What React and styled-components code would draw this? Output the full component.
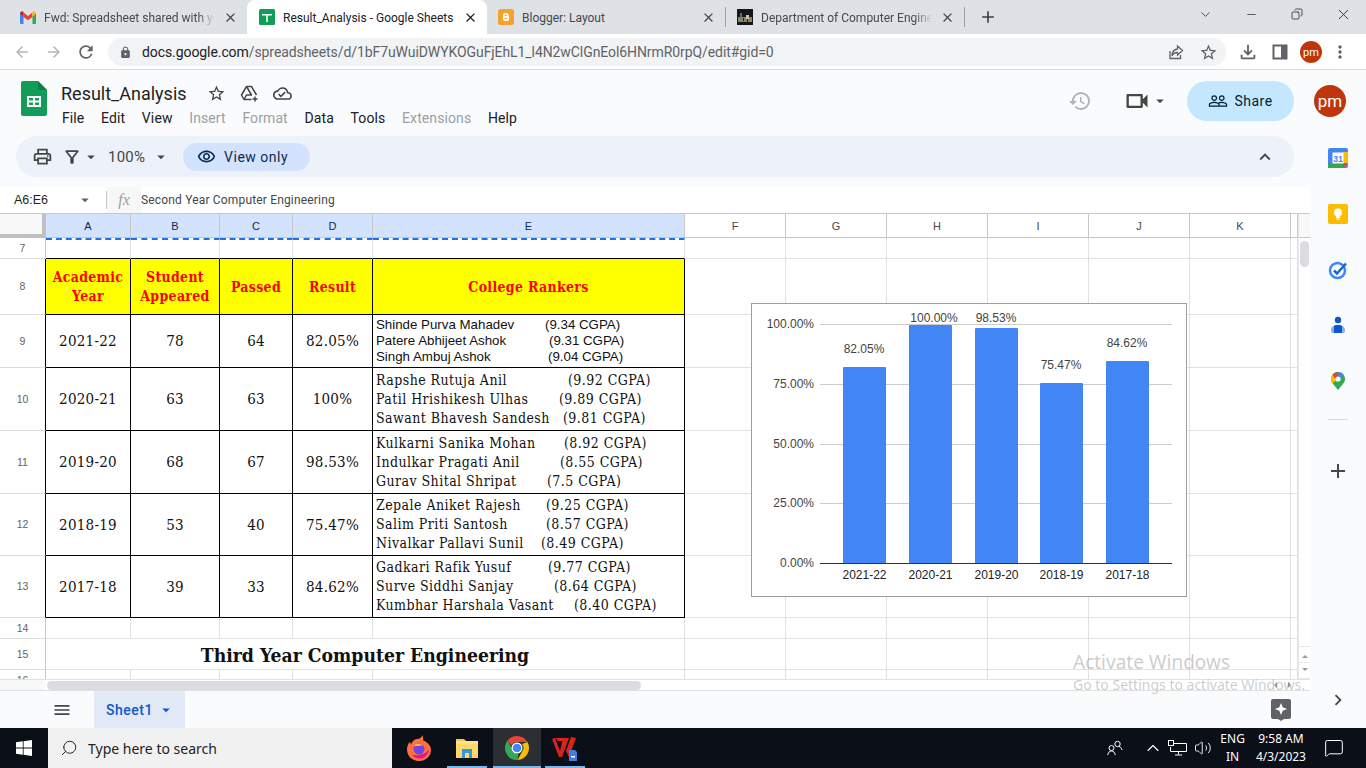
import React from 'react';
import styled, { createGlobalStyle } from 'styled-components';
import {
  MdArrowBack, MdArrowForward, MdRefresh, MdLock, MdStarBorder, MdOutlineFileDownload, MdMoreVert,
  MdClose, MdAdd, MdOutlineCloudDone, MdHistory, MdOutlineVideocam, MdArrowDropDown,
  MdPeopleOutline, MdOutlinePrint, MdOutlineFilterAlt, MdOutlineRemoveRedEye, MdKeyboardArrowUp,
  MdChevronRight, MdMenu,
} from 'react-icons/md';
import { ChevronDown, Minus, Copy, X, Search, MessageSquare, Volume2, ChevronUp } from 'lucide-react';

const serif = "'DejaVu Serif Condensed', 'Liberation Serif', serif";

const GlobalStyle = createGlobalStyle`
  html, body { margin: 0; padding: 0; background: #fff; }
  * { box-sizing: border-box; }
`;

const Page = styled.div`
  width: 1366px;
  height: 768px;
  overflow: hidden;
  position: relative;
  display: flex;
  flex-direction: column;
  font-family: 'Roboto', sans-serif;
  background: #f9fbfd;
`;
const Mirror = styled.span`
  display: flex;
  transform: scaleX(-1);
`;

/* browser chrome */
const TabStrip = styled.div`
  height: 34px;
  background: #dee1e6;
  display: flex;
  align-items: center;
  padding-left: 9px;
  flex: none;
`;
const Tab = styled.div`
  width: ${p => p.$w}px;
  height: 34px;
  display: flex;
  align-items: center;
  gap: 8px;
  padding: 0 9px 0 ${p => (p.$active ? 12 : 11)}px;
  font-family: 'Roboto', sans-serif;
  font-size: 12px;
  border-radius: 8px 8px 0 0;
  background: ${p => (p.$active ? '#fff' : 'transparent')};
  color: ${p => (p.$active ? '#202124' : '#45494e')};
`;
const TabTitle = styled.span`
  flex: 1;
  white-space: nowrap;
  overflow: hidden;
  padding-top: 1px;
  ${p => p.$fade && `
    -webkit-mask-image: linear-gradient(to right, #000 90%, transparent);
    mask-image: linear-gradient(to right, #000 90%, transparent);
  `}
`;
const TabSep = styled.div`
  width: 1px;
  height: 20px;
  background: #9aa0a6;
  flex: none;
`;
const NewTab = styled.div`
  margin-left: 13px;
  display: flex;
  color: #3c4043;
`;
const WinButtons = styled.div`
  margin-left: auto;
  display: flex;
  align-items: center;
  color: #202124;
  padding-bottom: 6px;
`;
const WinButton = styled.div`
  width: 46px;
  display: flex;
  justify-content: center;
`;
const AddressRow = styled.div`
  height: 36px;
  flex: none;
  background: #fff;
  border-bottom: 1px solid #dadce0;
  display: flex;
  align-items: center;
  padding: 1px 0 0 6px;
  color: #5f6368;
`;
const NavIcon = styled.div`
  width: 32px;
  display: flex;
  justify-content: center;
  color: ${p => (p.$off ? '#b3b6ba' : '#5f6368')};
`;
const Omnibox = styled.div`
  width: 1118px;
  height: 28px;
  margin-left: 6px;
  border-radius: 14px;
  background: #f1f3f4;
  display: flex;
  align-items: center;
  padding: 0 2px 0 11px;
  font-family: 'Roboto', sans-serif;
  font-size: 14px;
  color: #5f6368;
`;
const UrlText = styled.div`
  margin-left: 10px;
  flex: 1;
  white-space: nowrap;
  letter-spacing: -0.08px;
  b { font-weight: 400; color: #202124; }
`;
const OmniIcon = styled.div`
  width: 32px;
  display: flex;
  justify-content: center;
  color: #5f6368;
  margin-left: ${p => p.$ml || 0}px;
`;
const ProfileDot = styled.div`
  width: ${p => p.$size}px;
  height: ${p => p.$size}px;
  border-radius: 50%;
  background: #bf360c;
  color: #fff;
  display: flex;
  align-items: center;
  justify-content: center;
  font-family: 'Roboto', sans-serif;
  font-size: ${p => p.$font}px;
  flex: none;
  margin-left: ${p => p.$ml || 0}px;
`;

/* docs header */
const Main = styled.div`
  flex: 1;
  display: flex;
  min-height: 0;
`;
const Workspace = styled.div`
  width: 1310px;
  display: flex;
  flex-direction: column;
`;
const DocHeader = styled.div`
  height: 66px;
  flex: none;
  display: flex;
  align-items: flex-start;
  padding: 11px 20px 0 21px;
`;
const TitleBlock = styled.div`
  margin-left: 14px;
  display: flex;
  flex-direction: column;
`;
const TitleRow = styled.div`
  height: 24px;
  display: flex;
  align-items: center;
  font-size: 18px;
  color: #1f1f1f;
`;
const DocIcon = styled.div`
  width: 33px;
  display: flex;
  justify-content: center;
  color: #444746;
  &:first-of-type { margin-left: 13px; }
`;
const Menu = styled.div`
  display: flex;
  gap: 16.7px;
  margin-top: 3px;
  font-size: 14px;
  line-height: 20px;
  letter-spacing: 0.1px;
  margin-left: 1px;
`;
const MenuItem = styled.span`
  color: ${p => (p.$off ? '#9aa0a6' : '#202124')};
`;
const HeaderRight = styled.div`
  margin-left: auto;
  display: flex;
  align-items: center;
  height: 40px;
`;
const HistoryIcon = styled.div`
  display: flex;
  color: #b0b3b7;
  margin-right: 31px;
`;
const MeetButton = styled.div`
  display: flex;
  align-items: center;
  color: #444746;
  margin-right: 18px;
`;
const ShareButton = styled.div`
  width: 107px;
  height: 40px;
  border-radius: 20px;
  background: #c2e7ff;
  display: flex;
  align-items: center;
  justify-content: center;
  gap: 6px;
  font-size: 14px;
  letter-spacing: 0.5px;
  color: #001d35;
  margin-right: 20px;
`;

const ToolbarPill = styled.div`
  width: 1278px;
  height: 41px;
  flex: none;
  margin-left: 16px;
  border-radius: 21px;
  background: #edf2fa;
  display: flex;
  align-items: center;
  padding: 0 18px 0 16px;
  color: #444746;
`;
const ToolIcon = styled.div`
  display: flex;
  align-items: center;
  margin-left: ${p => p.$ml || 0}px;
  color: #444746;
`;
const ToolEnd = styled(ToolIcon)`
  margin-left: auto;
`;
const Zoom = styled.span`
  margin-left: 8px;
  font-size: 15px;
  letter-spacing: 0.2px;
  color: #444746;
`;
const ViewOnly = styled.div`
  margin-left: 13px;
  width: 127px;
  height: 28px;
  border-radius: 14px;
  background: #d3e3fd;
  display: flex;
  align-items: center;
  gap: 8px;
  padding-left: 14px;
  font-size: 14px;
  letter-spacing: 0.5px;
  color: #0b2c52;
`;

const FormulaBar = styled.div`
  height: 27px;
  flex: none;
  margin-top: 10px;
  background: #fff;
  display: flex;
  align-items: center;
  font-family: 'Liberation Sans', Arial, sans-serif;
  font-size: 12px;
  color: #444746;
  border-bottom: 1px solid #c7c7c7;
`;
const NameBox = styled.div`
  width: 107px;
  display: flex;
  align-items: center;
  padding-left: 14px;
  height: 18px;
  border-right: 1px solid #c7c7c7;
  font-size: 12.5px;
  color: #1f1f1f;
`;
const NameCaret = styled.div`
  margin-left: 28px;
  display: flex;
  color: #5f6368;
`;
const Fx = styled.div`
  width: 34px;
  height: 26px;
  background: #f7f7f7;
  display: flex;
  align-items: center;
  justify-content: center;
  font-family: 'Liberation Serif', serif;
  font-style: italic;
  font-size: 16px;
  color: #a0a0a0;
`;
const FormulaText = styled.div`
  font-family: 'Roboto', sans-serif;
  font-size: 12px;
  letter-spacing: 0.17px;
  color: #444746;
`;

/* sheet */
const columns = '46px 85px 89px 73px 80px 312px 101px 101px 101px 101px 101px 101px 7px';
const SheetRow = styled.div`
  display: grid;
  grid-template-columns: ${columns};
  height: ${p => p.$h}px;
`;
const SheetBody = styled.div`
  display: flex;
  height: 465px;
  flex: none;
  background: #fff;
`;
const GridPane = styled.div`
  width: 1298px;
  overflow: hidden;
`;
const ColHead = styled.div`
  height: 24px;
  display: flex;
  align-items: center;
  justify-content: center;
  font-family: 'Liberation Sans', Arial, sans-serif;
  font-size: 11px;
  background: ${p => (p.$sel ? '#d3e3fd' : '#fff')};
  border-right: 1px solid #c7c7c7;
  border-bottom: 1px solid #c7c7c7;
  color: ${p => (p.$sel ? '#0b2c52' : '#444746')};
`;
const Corner = styled(ColHead)`
  background: #f8f8f8;
  border-right: 4px solid #c0c0c0;
  border-bottom: 4px solid #c0c0c0;
`;
const RowNum = styled.div`
  display: flex;
  align-items: center;
  justify-content: center;
  font-family: 'Liberation Sans', Arial, sans-serif;
  font-size: 10.5px;
  color: #5f6368;
  background: #fff;
  padding-bottom: 1px;
  border-right: 1px solid ${p => (p.$black ? '#000' : '#c7c7c7')};
  border-bottom: 1px solid #dcdcdc;
`;
const Cell = styled.div`
  display: flex;
  align-items: center;
  justify-content: center;
  text-align: center;
  min-width: 0;
  overflow: hidden;
  font-family: ${serif};
  font-size: 15px;
  letter-spacing: 0.25px;
  color: #111;
  border-right: 1px solid ${p => (p.$black ? '#000' : '#e1e1e1')};
  border-bottom: 1px solid ${p => (p.$black || p.$under ? '#000' : '#e1e1e1')};
  ${p => p.$dash && 'border-top: 2px dashed #1a73e8;'}
  ${p => p.$span && `grid-column: span ${p.$span};`}
`;
const HeadCell = styled(Cell)`
  background: #ff0;
  color: #f00;
  font-weight: 700;
  font-size: 14px;
  letter-spacing: 0.3px;
  line-height: 19px;
  padding-top: 1px;
`;
const TitleCell = styled(Cell)`
  font-size: 19.2px;
  font-weight: 700;
  letter-spacing: 0;
  padding-top: 2px;
`;
const RankCell = styled(Cell)`
  flex-direction: column;
  align-items: stretch;
  justify-content: center;
  padding-left: 3px;
  text-align: left;
  line-height: ${p => (p.$plain ? '16px' : '19px')};
  font-size: ${p => (p.$plain ? '13.3px' : '14px')};
  letter-spacing: ${p => (p.$plain ? '0' : '0.45px')};
  font-family: ${p => (p.$plain ? "'Liberation Sans', Arial, sans-serif" : serif)};
`;
const RankLine = styled.div`
  display: flex;
  white-space: nowrap;
`;
const RankName = styled.span`
  flex: 0 0 ${p => p.$w}px;
`;
const VScroll = styled.div`
  width: 12px;
  display: flex;
  flex-direction: column;
  background: #fff;
  border-left: 1px solid #e8e8e8;
`;
const VTop = styled.div`
  height: 24px;
  background: #f8f8f8;
  border-bottom: 1px solid #c7c7c7;
`;
const VThumb = styled.div`
  margin: 3px 0 0 1px;
  width: 9px;
  height: 26px;
  border-radius: 5px;
  background: #dadce0;
`;
const VArrows = styled.div`
  margin-top: auto;
  border-top: 1px solid #e8e8e8;
`;
const ArrowSlot = styled.div`
  height: 16px;
  display: flex;
  align-items: center;
  justify-content: center;
  border-bottom: 1px solid #e8e8e8;
`;
const Triangle = styled.span`
  width: 0;
  height: 0;
  border: 3px solid transparent;
  ${p => `border-${p.$point}-color: #9a9a9a;`}
`;
const HScroll = styled.div`
  height: 12px;
  flex: none;
  border-top: 1px solid #e1e1e1;
  border-bottom: 1px solid #e1e1e1;
  display: flex;
  align-items: center;
  padding-left: 47px;
  background: linear-gradient(to right, #f8f8f8 45px, #fff 45px);
`;
const HThumb = styled.div`
  width: 594px;
  height: 9px;
  border-radius: 5px;
  background: #dadce0;
`;
const HArrows = styled.div`
  margin-left: auto;
  margin-right: 16px;
  display: flex;
  gap: 11px;
`;
const SheetTabs = styled.div`
  height: 37px;
  flex: none;
  display: flex;
  align-items: center;
  padding-left: 52px;
  color: #444746;
`;
const SheetTab = styled.div`
  margin-left: 22px;
  width: 91px;
  height: 37px;
  background: #e1e9f7;
  display: flex;
  align-items: center;
  padding-left: 12px;
  gap: 4px;
  font-family: 'Roboto', sans-serif;
  font-size: 14px;
  font-weight: 500;
  letter-spacing: 0.5px;
  color: #0b57d0;
`;
const ExploreBtn = styled.div`
  margin-left: auto;
  margin-right: 19px;
  display: flex;
`;

const SidePanel = styled.div`
  width: 56px;
  display: flex;
  flex-direction: column;
  align-items: center;
  padding-top: 12px;
`;
const SideIcon = styled.div`
  height: 56px;
  margin-top: ${p => p.$mt || 0}px;
  display: flex;
  align-items: ${p => (p.$mid ? 'center' : 'flex-start')};
  justify-content: center;
`;
const SideRule = styled.div`
  width: 20px;
  height: 1px;
  background: #d5d8dc;
  margin-top: -9px;
`;
const SideBottom = styled.div`
  margin-top: auto;
  margin-bottom: 17px;
  display: flex;
  color: #444746;
`;

/* taskbar */
const Taskbar = styled.div`
  height: 40px;
  flex: none;
  background: #0b0f18;
  display: flex;
  align-items: center;
  color: #fff;
`;
const StartBtn = styled.div`
  width: 48px;
  display: flex;
  justify-content: center;
`;
const SearchBox = styled.div`
  width: 344px;
  height: 40px;
  background: #f1f1f1;
  display: flex;
  align-items: center;
  padding-left: 12px;
  gap: 10px;
  font-family: 'Noto Sans', sans-serif;
  font-size: 14px;
  color: #222;
`;
const Pinned = styled.div`
  display: flex;
  margin-left: 3px;
`;
const PinSlot = styled.div`
  width: 48px;
  height: 40px;
  display: flex;
  align-items: center;
  justify-content: center;
  position: relative;
  margin-left: ${p => (p.$focus ? 2 : 0)}px;
  background: ${p => (p.$focus ? '#2b2e33' : 'transparent')};
  &::after {
    content: '';
    display: ${p => (p.$open ? 'block' : 'none')};
    position: absolute;
    bottom: 0;
    left: ${p => (p.$focus ? 0 : 4)}px;
    right: ${p => (p.$focus ? 0 : 4)}px;
    height: 2px;
    background: #76b9ed;
  }
`;
const Tray = styled.div`
  margin-left: auto;
  display: flex;
  align-items: center;
  color: #fff;
  font-family: 'Noto Sans', sans-serif;
  font-size: 12px;
`;
const TrayIcon = styled.div`
  display: flex;
  margin-right: ${p => p.$mr}px;
`;
const TrayText = styled.div`
  text-align: center;
  line-height: 18px;
  margin-right: ${p => p.$mr}px;
`;

/* overlays */
const ChartBox = styled.div`
  position: absolute;
  left: 751px;
  top: 303px;
  width: 436px;
  height: 294px;
  background: #fff;
  border: 1px solid #9e9e9e;
`;
const Watermark = styled.div`
  position: absolute;
  left: 1073px;
  top: 650px;
  font-family: 'Noto Sans', sans-serif;
  color: rgba(120, 120, 120, 0.38);
  pointer-events: none;
`;
const WatermarkTitle = styled.div`
  font-size: 19px;
  line-height: 24px;
`;
const WatermarkNote = styled.div`
  font-size: 14px;
  line-height: 22px;
  white-space: nowrap;
`;

const GmailIcon = () => (
  <svg width="16" height="13" viewBox="0 0 16 13">
    <path d="M0 2v10a1 1 0 0 0 1 1h2.500V5.500z" fill="#4285f4" />
    <path d="M16 2v10a1 1 0 0 1-1 1h-2.500V5.500z" fill="#34a853" />
    <path d="M3.500 6V1.500L8 5l4.500-3.500V6L8 9.200z" fill="#ea4335" />
    <path d="M0 2.500C0 .8 2-.5 3.500.8V6z" fill="#c5221f" />
    <path d="M16 2.500C16 .8 14-.5 12.500.8V6z" fill="#fbbc04" />
  </svg>
);
const SheetsFavicon = () => (
  <svg width="16" height="16" viewBox="0 0 16 16">
    <rect width="16" height="16" rx="1.500" fill="#0f9d58" />
    <path d="M3 5h10v1.500H8.800V13H7.200V6.500H3z" fill="#fff" />
  </svg>
);
const BloggerIcon = () => (
  <svg width="16" height="16" viewBox="0 0 16 16">
    <rect width="16" height="16" rx="2.500" fill="#f6a02d" />
    <path d="M5 6a2 2 0 0 1 2-2h1.500A2 2 0 0 1 10.500 6v.5c0 .4.6.3.6.9V10a2 2 0 0 1-2 2H7a2 2 0 0 1-2-2z" fill="#fff" />
    <rect x="6.500" y="5.800" width="2.500" height="1" fill="#f6a02d" />
    <rect x="6.500" y="9" width="3" height="1" fill="#f6a02d" />
  </svg>
);
const CollegeFavicon = () => (
  <svg width="16" height="16" viewBox="0 0 16 16">
    <rect width="16" height="16" fill="#14161a" />
    <rect x="1" y="8" width="14" height="5" fill="#8d8468" />
    <rect x="3" y="4" width="2" height="5" fill="#3c7f8c" />
    <rect x="9" y="6" width="3" height="4" fill="#c9c2a5" />
    <rect x="6" y="9" width="1" height="3" fill="#222" />
    <rect x="10" y="10" width="1" height="3" fill="#222" />
  </svg>
);
const ShareIcon = () => (
  <svg width="18" height="18" viewBox="0 0 18 18" fill="none" stroke="#5f6368" strokeWidth="1.300">
    <path d="M3 8v7.500h10.500V12" />
    <path d="M10.500 3l5 4.500-5 4.500V9.500C8 9.500 6 10.500 5 13c0-4 2-6.500 5.500-7z" />
  </svg>
);
const SidePanelIcon = () => (
  <svg width="16" height="16" viewBox="0 0 16 16">
    <path d="M1.500 1.500h13v13h-13z" fill="none" stroke="#5f6368" strokeWidth="2" />
    <rect x="9" y="1" width="6" height="14" fill="#5f6368" />
  </svg>
);
const SheetsLogo = () => (
  <svg width="26" height="35" viewBox="0 0 26 35">
    <path d="M2 0h15l9 9v24a2 2 0 0 1-2 2H2a2 2 0 0 1-2-2V2a2 2 0 0 1 2-2z" fill="#0f9d58" />
    <path d="M17 0l9 9h-7a2 2 0 0 1-2-2z" fill="#0b8043" />
    <path d="M6 15h14v11H6zm2 2v2.500h4V17zm6 0v2.500h4V17zm-6 4.500V24h4v-2.500zm6 0V24h4v-2.500z" fill="#fff" fillRule="evenodd" />
  </svg>
);
const DriveAddIcon = () => (
  <svg width="19" height="19" viewBox="0 0 19 19" fill="none" stroke="#444746" strokeWidth="1.500" strokeLinejoin="round">
    <path d="M6.500 2.500h5l5 8.500M6.500 2.500L1.500 11l2.500 4.500h7.500" />
    <path d="M6.500 2.500l5 8.500H6.500L4 15.500" />
    <path d="M15 12.500v5M12.500 15h5" />
  </svg>
);
const CalendarIcon = () => (
  <svg width="20" height="20" viewBox="0 0 20 20">
    <rect width="20" height="20" rx="2" fill="#4285f4" />
    <rect x="15" y="4" width="5" height="12" fill="#fbbc04" />
    <rect y="15" width="15" height="5" fill="#34a853" />
    <path d="M15 15h5l-5 5z" fill="#ea4335" />
    <rect x="4.500" y="4.500" width="11" height="11" fill="#fff" />
    <text x="10" y="13.500" textAnchor="middle" fontFamily="Liberation Sans, sans-serif" fontSize="8.500" fontWeight="700" fill="#4285f4">31</text>
  </svg>
);
const KeepIcon = () => (
  <svg width="20" height="20" viewBox="0 0 20 20">
    <rect width="20" height="20" rx="2" fill="#fbbc04" />
    <circle cx="10" cy="8.500" r="4" fill="#fff" />
    <rect x="8" y="12" width="4" height="2" fill="#fff" />
    <rect x="8.500" y="14.500" width="3" height="1.200" fill="#fff" />
  </svg>
);
const TasksIcon = () => (
  <svg width="20" height="20" viewBox="0 0 20 20" fill="none">
    <circle cx="9.500" cy="10.500" r="7.500" stroke="#4285f4" strokeWidth="2.500" />
    <path d="M6 10.500l3 3 9-10" stroke="#1a67d2" strokeWidth="2.500" />
  </svg>
);
const ContactsIcon = () => (
  <svg width="16" height="18" viewBox="0 0 16 18">
    <circle cx="8" cy="4" r="3.200" fill="#0b57d0" />
    <path d="M1 15c0-4 2-6 7-6s7 2 7 6a2 2 0 0 1-2 2H3a2 2 0 0 1-2-2z" fill="#82aef5" />
    <path d="M4 10c1-.7 2.300-1 4-1s3 .3 4 1v7H4z" fill="#0b57d0" />
  </svg>
);
const MapsIcon = () => (
  <svg width="14" height="18" viewBox="0 0 14 18">
    <path d="M7 0a7 7 0 0 1 5.500 11.300L7 18 1.500 11.300A7 7 0 0 1 7 0z" fill="#34a853" />
    <path d="M1.500 11.300A7 7 0 0 1 1.600 2.500L7 7z" fill="#fbbc04" />
    <path d="M1.600 2.500A7 7 0 0 1 7 0l1 4.500L4 7z" fill="#ea4335" />
    <path d="M7 0a7 7 0 0 1 5.600 2.800L8 8z" fill="#4285f4" />
    <circle cx="7" cy="7" r="2.600" fill="#fff" />
  </svg>
);
const ExploreIcon = () => (
  <svg width="20" height="22" viewBox="0 0 20 22">
    <path d="M2 0h16a2 2 0 0 1 2 2v16a2 2 0 0 1-2 2h-5l-3 2-3-2H2a2 2 0 0 1-2-2V2a2 2 0 0 1 2-2z" fill="#5f6368" />
    <path d="M10 4l1.700 4.300L16 10l-4.300 1.700L10 16l-1.700-4.300L4 10l4.300-1.700z" fill="#fff" />
  </svg>
);
const WindowsLogo = () => (
  <svg width="16" height="16" viewBox="0 0 16 16" fill="#fff">
    <path d="M0 2.300L6.800 1.300V7.600H0zM7.600 1.200L16 0V7.600H7.600zM0 8.400H6.800V14.700L0 13.700zM7.600 8.400H16V16L7.600 14.800z" />
  </svg>
);
const FirefoxIcon = () => (
  <svg width="24" height="26" viewBox="0 0 24 26">
    <path d="M12 26C5 26 0 21 0 14.500 0 11 1.500 8 3 7l1 2.500C5 6 8 4 10 4c3 0 5-2 5.500-4 1 3 .5 4.500 1 5.500C21 7.500 24 11 24 15c0 6-5 11-12 11z" fill="#ff7139" />
    <path d="M5 20c3 4 10 5 14 1 2-2 3-5 3-7-3 5-9 7-17 6z" fill="#e31587" />
    <circle cx="12" cy="14" r="5.500" fill="#7542e5" />
    <path d="M7 11c2-3 7-3 9 0-2-1-3-1-4 0-1.500 0-3 0-5 0z" fill="#ffbd4f" />
  </svg>
);
const FolderIcon = () => (
  <svg width="22" height="20" viewBox="0 0 22 20">
    <path d="M0 1h8l2 2h12v17H0z" fill="#f5c84c" />
    <rect y="3" width="22" height="3" fill="#fbe38e" />
    <rect x="0" y="6" width="22" height="14" fill="#ffd867" />
    <path d="M6 11h10v9h-3v-5H9v5H6z" fill="#2f9ae0" />
  </svg>
);
const ChromeIcon = () => (
  <svg width="24" height="24" viewBox="0 0 24 24">
    <path d="M12 0a12 12 0 0 1 10.400 6H12a6 6 0 0 0-5.500 3.600L2.600 4.600A12 12 0 0 1 12 0z" fill="#ea4335" />
    <path d="M22.400 6A12 12 0 0 1 12.500 24l4.700-8.500A6 6 0 0 0 17 8z" fill="#fbbc04" />
    <path d="M12.500 24A12 12 0 0 1 2.600 4.600L7.400 13a6 6 0 0 0 6 4.800z" fill="#34a853" />
    <circle cx="12" cy="12" r="5.500" fill="#fff" />
    <circle cx="12" cy="12" r="4.300" fill="#4285f4" />
  </svg>
);
const WpsIcon = () => (
  <svg width="26" height="26" viewBox="0 0 26 26">
    <path d="M0 4l3-1 5 13L11 3h6l-7 19H7zM14 16L19 2l5 1-7 19z" fill="#d9241c" />
    <path d="M3 3l10 0 1 3-8 0z" fill="#d9241c" />
    <path d="M17 15h6l2 2v9h-8z" fill="#3f7fe0" />
    <rect x="19" y="21" width="4" height="1.500" fill="#fff" />
  </svg>
);
const PeopleTray = () => (
  <svg width="16" height="16" viewBox="0 0 16 16" fill="none" stroke="#fff" strokeWidth="1">
    <circle cx="10.500" cy="4" r="2.700" />
    <path d="M15 10c-.5-2-1.500-3-3-3.500" />
    <circle cx="4.500" cy="8" r="2.500" />
    <path d="M.8 15c.3-2.500 1.700-4 3.700-4s3.400 1.500 3.700 4" />
  </svg>
);
const NetworkIcon = () => (
  <svg width="20" height="16" viewBox="0 0 20 16" fill="none" stroke="#fff" strokeWidth="1">
    <path d="M5 3.500h13.500v8H2.500V7" />
    <rect x="0.500" y="0.500" width="5" height="5" />
    <path d="M10.500 11.500v3M7 15h7" />
  </svg>
);

const years = [
  ['2021-22', '78', '64', '82.05%', 53, true, [['Shinde Purva Mahadev', '(9.34 CGPA)', 169], ['Patere Abhijeet Ashok', '(9.31 CGPA)', 173], ['Singh Ambuj Ashok', '(9.04 CGPA)', 172]]],
  ['2020-21', '63', '63', '100%', 63, false, [['Rapshe Rutuja Anil', '(9.92 CGPA)', 192], ['Patil Hrishikesh Ulhas', '(9.89 CGPA)', 183], ['Sawant Bhavesh Sandesh', '(9.81 CGPA)', 187]]],
  ['2019-20', '68', '67', '98.53%', 63, false, [['Kulkarni Sanika Mohan', '(8.92 CGPA)', 188], ['Indulkar Pragati Anil', '(8.55 CGPA)', 184], ['Gurav Shital Shripat', '(7.5 CGPA)', 171]]],
  ['2018-19', '53', '40', '75.47%', 62, false, [['Zepale Aniket Rajesh', '(9.25 CGPA)', 170], ['Salim Priti Santosh', '(8.57 CGPA)', 170], ['Nivalkar Pallavi Sunil', '(8.49 CGPA)', 165]]],
  ['2017-18', '39', '33', '84.62%', 62, false, [['Gadkari Rafik Yusuf', '(9.77 CGPA)', 172], ['Surve Siddhi Sanjay', '(8.64 CGPA)', 178], ['Kumbhar Harshala Vasant', '(8.40 CGPA)', 198]]],
];

const Blank = ({ n }) => Array.from({ length: n }, (_, i) => <Cell key={i} />);

const bars = [
  { x: 843, top: 367, label: '82.05%', ly: 349, lx: 864, cat: '2021-22' },
  { x: 909, top: 325, label: '100.00%', ly: 318, lx: 934, cat: '2020-21' },
  { x: 975, top: 328, label: '98.53%', ly: 318, lx: 996, cat: '2019-20' },
  { x: 1040, top: 383, label: '75.47%', ly: 365, lx: 1061, cat: '2018-19' },
  { x: 1106, top: 361, label: '84.62%', ly: 343, lx: 1127, cat: '2017-18' },
];
const ticks = [['100.00%', 324], ['75.00%', 384], ['50.00%', 444], ['25.00%', 503], ['0.00%', 563]];

const Chart = () => (
  <ChartBox>
    <svg width="434" height="292" viewBox="752 304 434 292" fontFamily="Liberation Sans, Arial, sans-serif" fontSize="12">
      {ticks.map(([t, y]) => (
        <g key={t}>
          <line x1="820" x2="1172" y1={y + 0.5} y2={y + 0.5} stroke={y === 563 ? '#333' : '#ccc'} />
          <text x="814" y={y + 4} textAnchor="end" fill="#444">{t}</text>
        </g>
      ))}
      {bars.map(b => (
        <g key={b.cat}>
          <path d={`M${b.x} 563V${b.top + 1}a1 1 0 0 1 1-1h41a1 1 0 0 1 1 1V563z`} fill="#4285f4" />
          <text x={b.lx} y={b.ly + 4} textAnchor="middle" fill="#444">{b.label}</text>
          <text x={b.x + 21.500} y="579" textAnchor="middle" fill="#222">{b.cat}</text>
        </g>
      ))}
    </svg>
  </ChartBox>
);

export default function App() {
  return (
    <Page>
      <GlobalStyle />
      <TabStrip>
        <Tab $w={238}><GmailIcon /><TabTitle $fade>Fwd: Spreadsheet shared with you</TabTitle><MdClose size={15} /></Tab>
        <Tab $w={240} $active><SheetsFavicon /><TabTitle>Result_Analysis - Google Sheets</TabTitle><MdClose size={15} /></Tab>
        <Tab $w={238}><BloggerIcon /><TabTitle>Blogger: Layout</TabTitle><MdClose size={15} /></Tab>
        <TabSep />
        <Tab $w={238}><CollegeFavicon /><TabTitle $fade>Department of Computer Engineering</TabTitle><MdClose size={15} /></Tab>
        <TabSep />
        <NewTab><MdAdd size={20} /></NewTab>
        <WinButtons>
          <WinButton><ChevronDown size={15} strokeWidth={1.200} /></WinButton>
          <WinButton><Minus size={13} strokeWidth={1.300} /></WinButton>
          <WinButton><Mirror><Copy size={12} strokeWidth={1.500} /></Mirror></WinButton>
          <WinButton><X size={17} strokeWidth={1.200} /></WinButton>
        </WinButtons>
      </TabStrip>
      <AddressRow>
        <NavIcon $off><MdArrowBack size={18} /></NavIcon>
        <NavIcon $off><MdArrowForward size={18} /></NavIcon>
        <NavIcon><MdRefresh size={20} /></NavIcon>
        <Omnibox>
          <MdLock size={13} />
          <UrlText><b>docs.google.com</b>/spreadsheets/d/1bF7uWuiDWYKOGuFjEhL1_l4N2wClGnEol6HNrmR0rpQ/edit#gid=0</UrlText>
          <OmniIcon><ShareIcon /></OmniIcon>
          <OmniIcon><MdStarBorder size={19} /></OmniIcon>
        </Omnibox>
        <OmniIcon $ml={6}><MdOutlineFileDownload size={22} /></OmniIcon>
        <OmniIcon><SidePanelIcon /></OmniIcon>
        <ProfileDot $size={22} $font={11} $ml={4}>pm</ProfileDot>
        <OmniIcon $ml={2}><MdMoreVert size={20} /></OmniIcon>
      </AddressRow>
      <DocHeader>
        <SheetsLogo />
        <TitleBlock>
          <TitleRow>
            Result_Analysis
            <DocIcon><MdStarBorder size={19} /></DocIcon>
            <DocIcon><DriveAddIcon /></DocIcon>
            <DocIcon><MdOutlineCloudDone size={19} /></DocIcon>
          </TitleRow>
          <Menu>
            <MenuItem>File</MenuItem>
            <MenuItem>Edit</MenuItem>
            <MenuItem>View</MenuItem>
            <MenuItem $off>Insert</MenuItem>
            <MenuItem $off>Format</MenuItem>
            <MenuItem>Data</MenuItem>
            <MenuItem>Tools</MenuItem>
            <MenuItem $off>Extensions</MenuItem>
            <MenuItem>Help</MenuItem>
          </Menu>
        </TitleBlock>
        <HeaderRight>
          <HistoryIcon><MdHistory size={24} /></HistoryIcon>
          <MeetButton><MdOutlineVideocam size={28} /><MdArrowDropDown size={18} /></MeetButton>
          <ShareButton><MdPeopleOutline size={20} />Share</ShareButton>
          <ProfileDot $size={32} $font={17}>pm</ProfileDot>
        </HeaderRight>
      </DocHeader>
      <Main>
        <Workspace>
          <ToolbarPill>
            <ToolIcon><MdOutlinePrint size={21} /></ToolIcon>
            <ToolIcon $ml={9}><MdOutlineFilterAlt size={20} /><MdArrowDropDown size={18} /></ToolIcon>
            <Zoom>100%</Zoom>
            <ToolIcon $ml={7}><MdArrowDropDown size={18} /></ToolIcon>
            <ViewOnly><MdOutlineRemoveRedEye size={19} />View only</ViewOnly>
            <ToolEnd><MdKeyboardArrowUp size={22} /></ToolEnd>
          </ToolbarPill>
          <FormulaBar>
            <NameBox>A6:E6<NameCaret><MdArrowDropDown size={18} /></NameCaret></NameBox>
            <Fx>fx</Fx>
            <FormulaText>Second Year Computer Engineering</FormulaText>
          </FormulaBar>
          <SheetBody>
            <GridPane>
              <SheetRow $h={24}>
                <Corner />
                {'ABCDE'.split('').map(c => <ColHead key={c} $sel>{c}</ColHead>)}
                {'FGHIJK'.split('').map(c => <ColHead key={c}>{c}</ColHead>)}
                <ColHead />
              </SheetRow>
              <SheetRow $h={21}>
                <RowNum>7</RowNum>
                {[0, 1, 2, 3, 4].map(i => <Cell key={i} $dash $under />)}
                <Blank n={7} />
              </SheetRow>
              <SheetRow $h={56}>
                <RowNum $black>8</RowNum>
                <HeadCell $black>Academic<br />Year</HeadCell>
                <HeadCell $black>Student<br />Appeared</HeadCell>
                <HeadCell $black>Passed</HeadCell>
                <HeadCell $black>Result</HeadCell>
                <HeadCell $black>College Rankers</HeadCell>
                <Blank n={7} />
              </SheetRow>
              {years.map(([year, appeared, passed, result, h, plain, rankers], i) => (
                <SheetRow key={year} $h={h}>
                  <RowNum $black>{9 + i}</RowNum>
                  <Cell $black>{year}</Cell>
                  <Cell $black>{appeared}</Cell>
                  <Cell $black>{passed}</Cell>
                  <Cell $black>{result}</Cell>
                  <RankCell $black $plain={plain}>
                    {rankers.map(([name, gpa, w]) => (
                      <RankLine key={name}><RankName $w={w}>{name}</RankName><span>{gpa}</span></RankLine>
                    ))}
                  </RankCell>
                  <Blank n={7} />
                </SheetRow>
              ))}
              <SheetRow $h={21}>
                <RowNum>14</RowNum>
                <Blank n={12} />
              </SheetRow>
              <SheetRow $h={31}>
                <RowNum>15</RowNum>
                <TitleCell $span={5}>Third Year Computer Engineering</TitleCell>
                <Blank n={7} />
              </SheetRow>
              <SheetRow $h={21}>
                <RowNum>16</RowNum>
                <Blank n={12} />
              </SheetRow>
            </GridPane>
            <VScroll>
              <VTop />
              <VThumb />
              <VArrows>
                <ArrowSlot><Triangle $point="bottom" /></ArrowSlot>
                <ArrowSlot><Triangle $point="top" /></ArrowSlot>
              </VArrows>
            </VScroll>
          </SheetBody>
          <HScroll>
            <HThumb />
            <HArrows><Triangle $point="right" /><Triangle $point="left" /></HArrows>
          </HScroll>
          <SheetTabs>
            <MdMenu size={20} />
            <SheetTab>Sheet1<MdArrowDropDown size={18} /></SheetTab>
            <ExploreBtn><ExploreIcon /></ExploreBtn>
          </SheetTabs>
        </Workspace>
        <SidePanel>
          <SideIcon><CalendarIcon /></SideIcon>
          <SideIcon><KeepIcon /></SideIcon>
          <SideIcon><TasksIcon /></SideIcon>
          <SideIcon><ContactsIcon /></SideIcon>
          <SideIcon><MapsIcon /></SideIcon>
          <SideRule />
          <SideIcon $mt={23} $mid><MdAdd size={24} color="#444746" /></SideIcon>
          <SideBottom><MdChevronRight size={22} /></SideBottom>
        </SidePanel>
      </Main>
      <Taskbar>
        <StartBtn><WindowsLogo /></StartBtn>
        <SearchBox><Mirror><Search size={18} strokeWidth={1.300} /></Mirror>Type here to search</SearchBox>
        <Pinned>
          <PinSlot><FirefoxIcon /></PinSlot>
          <PinSlot $open><FolderIcon /></PinSlot>
          <PinSlot $open $focus><ChromeIcon /></PinSlot>
          <PinSlot $open><WpsIcon /></PinSlot>
        </Pinned>
        <Tray>
          <TrayIcon $mr={20}><PeopleTray /></TrayIcon>
          <TrayIcon $mr={5}><ChevronUp size={20} strokeWidth={1.300} /></TrayIcon>
          <TrayIcon $mr={6}><NetworkIcon /></TrayIcon>
          <TrayIcon $mr={8}><Volume2 size={18} strokeWidth={1.200} /></TrayIcon>
          <TrayText $mr={11}>ENG<br />IN</TrayText>
          <TrayText $mr={18}>9:58 AM<br />4/3/2023</TrayText>
          <TrayIcon $mr={22}><MessageSquare size={20} strokeWidth={1.200} /></TrayIcon>
        </Tray>
      </Taskbar>
      <Chart />
      <Watermark>
        <WatermarkTitle>Activate Windows</WatermarkTitle>
        <WatermarkNote>Go to Settings to activate Windows.</WatermarkNote>
      </Watermark>
    </Page>
  );
}
